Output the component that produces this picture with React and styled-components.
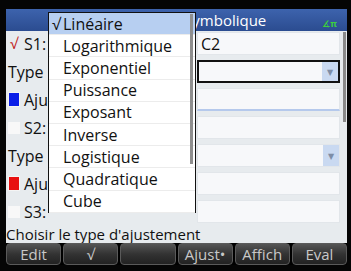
import React from "react";
import styled, { createGlobalStyle } from "styled-components";

const Global = createGlobalStyle`
  html, body { margin: 0; padding: 0; background: #000; }
  body { font-family: "Open Sans", "DejaVu Sans", sans-serif; }
`;

const Screen = styled.div`
  position: relative;
  width: 351px;
  height: 271px;
  box-sizing: border-box;
  background: #050505;
  padding: 9px 4px 6px 6px;
  display: flex;
  flex-direction: column;
  overflow: hidden;
`;

const TitleBar = styled.div`
  height: 22px;
  flex: none;
  background: linear-gradient(#3d63ad, #2b4c90);
  color: #fff;
  font-size: 15px;
  display: flex;
  align-items: center;
  justify-content: flex-end;
  gap: 56px;
  padding: 0 10px 0 3px;
  white-space: nowrap;
  overflow: hidden;
`;

const AngleIcon = styled.span`
  color: #3ccf3c;
  font-size: 9px;
  font-weight: 700;
  margin-top: 6px;
`;

const Body = styled.div`
  flex: 1;
  background: #e7ebee;
  position: relative;
  display: flex;
  flex-direction: column;
  gap: 5px;
  padding: 1px 0 0 0;
`;

const Row = styled.div`
  height: 23px;
  display: grid;
  grid-template-columns: 191px 143px;
  align-items: center;
`;

const Label = styled.div`
  display: flex;
  align-items: center;
  gap: 4px;
  font-size: 16px;
  color: #111;
  padding-left: ${(p) => p.$pad || 2}px;
  white-space: nowrap;
`;

const Check = styled.span`
  width: 12px;
  height: 12px;
  background: ${(p) => (p.$on ? "transparent" : "#f8f8f8")};
  color: #c02020;
  font-size: 15px;
  display: inline-flex;
  align-items: center;
  justify-content: center;
  line-height: 1;
`;

const Swatch = styled.span`
  width: 10px;
  height: 13px;
  background: ${(p) => p.$color};
  border: 1px solid #f4f4f4;
`;

const Field = styled.div`
  height: 23px;
  box-sizing: border-box;
  background: #f7f8fa;
  border: ${(p) => (p.$focus ? "2px solid #111" : "1px solid #e2e6ea")};
  border-bottom: ${(p) => (p.$line ? "2px solid #b5c9ec" : "")};
  display: flex;
  align-items: center;
  justify-content: space-between;
  font-size: 16px;
  color: #111;
  padding-left: 3px;
`;

const Arrow = styled.span`
  width: 16px;
  align-self: stretch;
  background: #c9d9f1;
  color: #7d8da6;
  font-size: 8px;
  display: flex;
  align-items: center;
  justify-content: center;
`;

const PageScroll = styled.div`
  position: absolute;
  right: 1px;
  top: 1px;
  width: 3px;
  height: 90px;
  background: #8a8a8a;
`;

const Help = styled.div`
  height: 19px;
  flex: none;
  background: #e7ebee;
  font-size: 15px;
  color: #111;
  display: flex;
  align-items: center;
  padding-left: 0px;
  white-space: nowrap;
`;

const ButtonBar = styled.div`
  height: 22px;
  flex: none;
  background: #000;
  display: grid;
  grid-template-columns: repeat(6, 1fr);
  gap: 2px;
`;

const SoftKey = styled.div`
  border-radius: 4px;
  border: 1px solid #5a5a5a;
  background: linear-gradient(#555, #333 50%, #222);
  color: #c8c8c8;
  font-size: 15px;
  display: flex;
  align-items: center;
  justify-content: center;
`;

const Menu = styled.div`
  position: absolute;
  left: 48px;
  top: 12px;
  width: 148px;
  height: 201px;
  box-sizing: border-box;
  border: 1px solid #111;
  background: #fff;
  display: flex;
  flex-direction: column;
`;

const Item = styled.div`
  height: 22.2px;
  flex: none;
  box-sizing: border-box;
  position: relative;
  display: flex;
  align-items: center;
  padding-left: 14px;
  font-size: 16px;
  color: #111;
  background: ${(p) => (p.$sel ? "#b7cff1" : "#fff")};
  border-bottom: 1px solid #ececec;
`;

const Tick = styled.span`
  position: absolute;
  left: 3px;
`;

const MenuScroll = styled.div`
  position: absolute;
  right: 2px;
  top: 1px;
  width: 3px;
  height: 150px;
  background: #8e8e8e;
`;

const items = [
  "Linéaire",
  "Logarithmique",
  "Exponentiel",
  "Puissance",
  "Exposant",
  "Inverse",
  "Logistique",
  "Quadratique",
  "Cube",
];

export default function App() {
  return (
    <>
      <Global />
      <Screen>
        <TitleBar>
          <span>Stats 2Var Vue symbolique</span>
          <AngleIcon>∡π</AngleIcon>
        </TitleBar>
        <Body>
          <Row>
            <Label>
              <Check $on>√</Check>S1:
            </Label>
            <Field>C2</Field>
          </Row>
          <Row>
            <Label $pad={0}>Type 1:</Label>
            <Field $focus>
              <span />
              <Arrow>▼</Arrow>
            </Field>
          </Row>
          <Row>
            <Label>
              <Swatch $color="#0a1ee8" />
              Ajust1:
            </Label>
            <Field $line />
          </Row>
          <Row>
            <Label>
              <Check />
              S2:
            </Label>
            <Field />
          </Row>
          <Row>
            <Label $pad={0}>Type 2:</Label>
            <Field>
              <span />
              <Arrow>▼</Arrow>
            </Field>
          </Row>
          <Row>
            <Label>
              <Swatch $color="#e81010" />
              Ajust2:
            </Label>
            <Field />
          </Row>
          <Row>
            <Label>
              <Check />
              S3:
            </Label>
            <Field />
          </Row>
          <PageScroll />
        </Body>
        <Help>Choisir le type d'ajustement</Help>
        <ButtonBar>
          <SoftKey>Edit</SoftKey>
          <SoftKey>√</SoftKey>
          <SoftKey />
          <SoftKey>Ajust•</SoftKey>
          <SoftKey>Affich</SoftKey>
          <SoftKey>Eval</SoftKey>
        </ButtonBar>
        <Menu>
          {items.map((t, i) => (
            <Item key={t} $sel={i === 0}>
              {i === 0 && <Tick>√</Tick>}
              {t}
            </Item>
          ))}
          <MenuScroll />
        </Menu>
      </Screen>
    </>
  );
}
